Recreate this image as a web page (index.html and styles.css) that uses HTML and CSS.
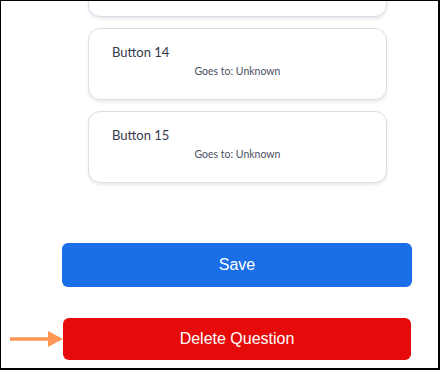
FILE: index.html
```html
<!DOCTYPE html>
<html>
<head>
<meta charset="utf-8">
<link rel="stylesheet" href="styles.css">
</head>
<body>
<div class="frame">
  <div class="cards">
    <div class="card"></div>
    <div class="card">
      <div class="card-title">Button 14</div>
      <div class="card-sub">Goes to: Unknown</div>
    </div>
    <div class="card">
      <div class="card-title">Button 15</div>
      <div class="card-sub">Goes to: Unknown</div>
    </div>
  </div>
  <div class="actions">
    <button class="btn btn-save">Save</button>
    <button class="btn btn-delete">Delete Question</button>
  </div>
  <svg class="arrow" width="60" height="20" viewBox="0 0 60 20">
    <line x1="0" y1="9" x2="40" y2="9" stroke="#ff9655" stroke-width="3.5"/>
    <polygon points="38,1 53,9 38,17" fill="#ff9655"/>
  </svg>
</div>
</body>
</html>
```

FILE: styles.css
```css
html, body {
  margin: 0;
  padding: 0;
  background: #fff;
}
.frame {
  position: relative;
  width: 440px;
  height: 370px;
  box-sizing: border-box;
  border-style: solid;
  border-color: #000;
  border-width: 1px 2px 2px 1px;
  overflow: hidden;
  font-family: "Liberation Sans", Arial, sans-serif;
}
.cards {
  display: flex;
  flex-direction: column;
  gap: 11px;
  margin-top: -56px;
  margin-left: 87px;
  width: 299px;
}
.card {
  box-sizing: border-box;
  height: 72px;
  border: 1px solid #d8dde8;
  border-radius: 12px;
  box-shadow: 0 2px 3px rgba(40, 50, 80, 0.10);
  padding: 15px 23px 0;
  font-family: Lato, "Open Sans", sans-serif;
  background: #fff;
}
.card-title {
  font-size: 13px;
  line-height: 16px;
  color: #343a4b;
}
.card-sub {
  margin-top: 4px;
  font-size: 10.5px;
  line-height: 14px;
  color: #4a5062;
  text-align: center;
}
.actions {
  display: flex;
  flex-direction: column;
  margin-top: 60px;
  margin-left: 61px;
}
.btn {
  border: none;
  color: #fff;
  font-family: "Liberation Sans", Arial, sans-serif;
  font-size: 16px;
  border-radius: 6px;
  padding: 0;
}
.btn-save {
  width: 350px;
  height: 44px;
  background: #1a6fe8;
}
.btn-delete {
  margin-top: 31px;
  margin-left: 1px;
  width: 348px;
  height: 42px;
  background: #e60a0a;
}
.arrow {
  position: absolute;
  left: 9px;
  top: 329px;
}
```
